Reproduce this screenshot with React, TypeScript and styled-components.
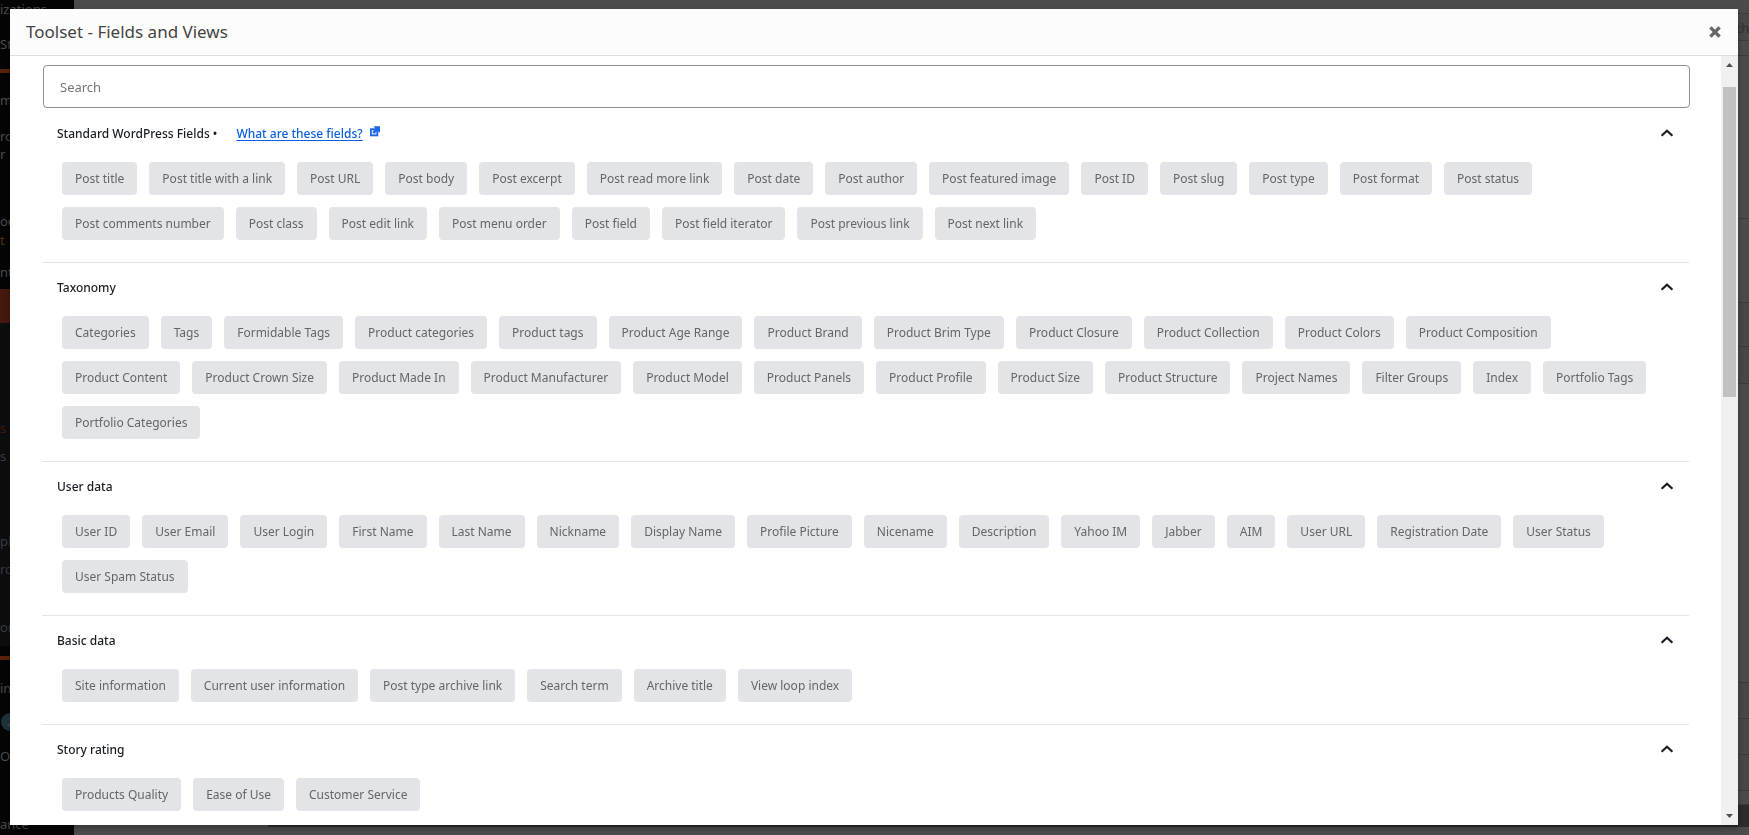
import React, { useState } from "react";
import styled, { createGlobalStyle, css } from "styled-components";

const GlobalStyle = createGlobalStyle`
  *, *::before, *::after { box-sizing: border-box; }
  html, body, #root { height: 100%; }
  body {
    margin: 0;
    overflow: hidden;
    background: #4b4b4b;
    color: #1d2327;
    font-family: "Noto Sans", "Open Sans", sans-serif;
    font-size: 12px;
  }
`;

/* ---------- dimmed admin page behind the dialog ---------- */

const Page = styled.div`
  height: 100vh;
  display: flex;
  overflow: hidden;
`;

const AdminMenu = styled.ul`
  flex: 0 0 74px;
  margin: 0;
  padding: 0;
  list-style: none;
  background: #050505;
  overflow: hidden;
`;

const tones = {
  plain: css`background: #050505; color: #4a4b4c;`,
  sub: css`background: #0b0d0f; color: #3b3c3d;`,
  warm: css`background: #050505; color: #4a3310;`,
  hot: css`background: #0b0d0f; color: #47180e;`,
  current: css`background: #47180e; color: #4a4b4c;`,
  rule: css`background: #5a220c;`,
};

const MenuItem = styled.li<{ $h: number; $tone: keyof typeof tones }>`
  display: flex;
  align-items: center;
  height: ${(p) => p.$h}px;
  font-size: 13px;
  line-height: 18px;
  white-space: nowrap;
  ${(p) => tones[p.$tone]}
`;

const Count = styled.span`
  width: 18px;
  height: 18px;
  margin-left: 1px;
  border-radius: 50%;
  background: #1c343b;
  color: #4a4b4c;
  font-size: 11px;
  text-align: center;
`;

const Workspace = styled.div`
  flex: 1;
  display: flex;
  flex-direction: column;
  min-width: 0;
`;

const WorkRow = styled.div<{ $h: number; $shade?: string }>`
  height: ${(p) => p.$h}px;
  border-bottom: 1px solid #3b3b3b;
  background: ${(p) => p.$shade ?? "transparent"};
  color: #2e2f30;
  font-size: 13px;
  line-height: 28px;
  text-align: right;
`;

const WorkFooter = styled.div`
  height: 22px;
  margin-left: 194px;
  background: #2c2c2c;
`;

/* ---------- dialog ---------- */

const Overlay = styled.div`
  position: fixed;
  inset: 0;
  display: flex;
  padding: 9px 11px 10px 10px;
`;

const Dialog = styled.section`
  flex: 1;
  display: flex;
  flex-direction: column;
  min-width: 0;
  background: #fff;
  box-shadow: 0 3px 6px rgba(0, 0, 0, 0.3);
`;

const DialogHeader = styled.header`
  flex: none;
  display: flex;
  align-items: center;
  justify-content: space-between;
  height: 47px;
  padding: 0 16px;
  background: #fcfcfc;
  border-bottom: 1px solid #dfdfdf;
`;

const DialogTitle = styled.h1`
  margin: 0;
  color: #444;
  font-size: 17px;
  font-weight: 400;
  line-height: 24px;
`;

const CloseButton = styled.button`
  display: flex;
  padding: 0;
  border: 0;
  background: none;
  color: #666;
  cursor: pointer;
`;

const DialogBody = styled.div`
  flex: 1;
  display: flex;
  min-height: 0;
`;

const Content = styled.div`
  flex: 1;
  min-width: 0;
  padding: 9px 31px 0 32px;
  overflow-y: auto;
  scrollbar-width: none;
`;

const SearchRow = styled.div`
  display: flex;
  padding-left: 1px;
`;

const SearchBox = styled.input`
  flex: 1;
  height: 43px;
  padding: 0 16px;
  border: 1px solid #8c8f94;
  border-radius: 4px;
  background: #fff;
  color: #2c3338;
  font: 13px "Noto Sans", "Open Sans", sans-serif;
  &::placeholder { color: #757575; opacity: 1; }
`;

const Group = styled.section`
  margin-right: 1px;
  padding-bottom: 22px;
  border-top: 1px solid #e2e4e7;
  &:first-of-type { border-top-color: transparent; }
`;

const GroupHeader = styled.div`
  display: flex;
  align-items: flex-start;
  justify-content: space-between;
  height: 53px;
  padding: 15px 15px 0;
`;

const GroupTitle = styled.h2`
  display: flex;
  align-items: center;
  margin: 0;
  color: #191e23;
  font-size: 12px;
  font-weight: 500;
  line-height: 20px;
  white-space: pre;
`;

const HelpLink = styled.a`
  display: flex;
  align-items: flex-start;
  gap: 7px;
  margin-left: 19px;
  color: #0b5fe0;
  text-underline-offset: 2px;
`;

const ToggleButton = styled.button`
  display: flex;
  align-items: center;
  height: 18px;
  padding: 0;
  border: 0;
  background: none;
  color: #191e23;
  cursor: pointer;
`;

const Chips = styled.div`
  display: flex;
  flex-wrap: wrap;
  gap: 12px;
  padding: 0 20px;
`;

const Chip = styled.button`
  height: 33px;
  padding: 0 13px;
  border: 0;
  border-radius: 4px;
  background: #e2e4e7;
  color: #666;
  font: 12px/18px "Noto Sans", "Open Sans", sans-serif;
  white-space: nowrap;
  cursor: pointer;
`;

const ScrollTrack = styled.div`
  flex: 0 0 17px;
  display: flex;
  flex-direction: column;
  align-items: center;
  justify-content: space-between;
  background: #f0f0f0;
`;

const ScrollArrow = styled.svg`
  flex: none;
  display: block;
  width: 17px;
  height: 17px;
  fill: #505050;
`;

const ScrollLane = styled.div`
  flex: 1;
  width: 13px;
  padding-top: 14px;
`;

const ScrollThumb = styled.div`
  height: 43%;
  background: #c1c1c1;
`;

type GroupData = { title: string; help?: boolean; fields: string[] };

const groups: GroupData[] = [
  {
    title: "Standard WordPress Fields",
    help: true,
    fields: [
      "Post title", "Post title with a link", "Post URL", "Post body", "Post excerpt",
      "Post read more link", "Post date", "Post author", "Post featured image", "Post ID",
      "Post slug", "Post type", "Post format", "Post status", "Post comments number",
      "Post class", "Post edit link", "Post menu order", "Post field", "Post field iterator",
      "Post previous link", "Post next link",
    ],
  },
  {
    title: "Taxonomy",
    fields: [
      "Categories", "Tags", "Formidable Tags", "Product categories", "Product tags",
      "Product Age Range", "Product Brand", "Product Brim Type", "Product Closure",
      "Product Collection", "Product Colors", "Product Composition", "Product Content",
      "Product Crown Size", "Product Made In", "Product Manufacturer", "Product Model",
      "Product Panels", "Product Profile", "Product Size", "Product Structure",
      "Project Names", "Filter Groups", "Index", "Portfolio Tags", "Portfolio Categories",
    ],
  },
  {
    title: "User data",
    fields: [
      "User ID", "User Email", "User Login", "First Name", "Last Name", "Nickname",
      "Display Name", "Profile Picture", "Nicename", "Description", "Yahoo IM", "Jabber",
      "AIM", "User URL", "Registration Date", "User Status", "User Spam Status",
    ],
  },
  {
    title: "Basic data",
    fields: [
      "Site information", "Current user information", "Post type archive link",
      "Search term", "Archive title", "View loop index",
    ],
  },
  { title: "Story rating", fields: ["Products Quality", "Ease of Use", "Customer Service"] },
];

const menu: { h: number; tone: keyof typeof tones; text?: string; count?: number }[] = [
  { h: 18, tone: "plain", text: "izations" },
  { h: 51, tone: "plain", text: "St" },
  { h: 4, tone: "rule" },
  { h: 54, tone: "plain", text: "mm" },
  { h: 17, tone: "plain", text: "ro" },
  { h: 19, tone: "plain", text: "r" },
  { h: 48, tone: "plain" },
  { h: 20, tone: "plain", text: "oc" },
  { h: 18, tone: "warm", text: "t" },
  { h: 6, tone: "plain" },
  { h: 34, tone: "plain", text: "nt" },
  { h: 34, tone: "current" },
  { h: 91, tone: "sub" },
  { h: 28, tone: "hot", text: "s" },
  { h: 28, tone: "sub", text: "s" },
  { h: 57, tone: "sub" },
  { h: 28, tone: "sub", text: "pl" },
  { h: 28, tone: "sub", text: "rc" },
  { h: 24, tone: "sub" },
  { h: 39, tone: "sub", text: "or" },
  { h: 10, tone: "plain" },
  { h: 4, tone: "rule" },
  { h: 11, tone: "plain" },
  { h: 34, tone: "plain", text: "in" },
  { h: 34, tone: "plain", count: 2 },
  { h: 34, tone: "plain", text: "Org" },
  { h: 34, tone: "plain" },
  { h: 34, tone: "plain", text: "ance" },
];

const workRows: { h: number; text?: string; shade?: string }[] = [
  { h: 14 },
  { h: 27, text: "th", shade: "#484848" },
  { h: 15 },
  { h: 163 },
  { h: 84 },
  { h: 44, shade: "#474747" },
  { h: 37, shade: "#474747" },
  { h: 299 },
  { h: 36, shade: "#474747" },
  { h: 36, shade: "#474747" },
  { h: 36, shade: "#474747" },
  { h: 14 },
];

const Chevron = ({ open }: { open: boolean }) => (
  <svg width="14" height="8" viewBox="0 0 14 8" fill="none" stroke="currentColor" strokeWidth="2.2">
    <path d={open ? "M1.6 6.8 L7 1.8 L12.4 6.8" : "M1.6 1.2 L7 6.2 L12.4 1.2"} />
  </svg>
);

const ExternalIcon = () => (
  <svg width="10" height="15" viewBox="0 -2 10 15" fill="none" stroke="#1a66e5" aria-hidden="true">
    <rect x="0.8" y="3.2" width="6.6" height="6.2" fill="#c9dcfa" strokeWidth="1.8" />
    <path d="M3.4 6.8L7.6 2.6" strokeWidth="2.4" />
    <path d="M3.6 0.2H10V6.8L8 5.2L5.2 2.4Z" fill="#1a66e5" stroke="none" />
  </svg>
);

const FieldGroup = ({ group }: { group: GroupData }) => {
  const [open, setOpen] = useState(true);
  return (
    <Group>
      <GroupHeader>
        <GroupTitle>
          {group.title}
          {group.help && (
            <>
              {" •"}
              <HelpLink href="#fields">
                What are these fields?
                <ExternalIcon />
              </HelpLink>
            </>
          )}
        </GroupTitle>
        <ToggleButton type="button" aria-expanded={open} aria-label={group.title} onClick={() => setOpen(!open)}>
          <Chevron open={open} />
        </ToggleButton>
      </GroupHeader>
      {open && (
        <Chips>
          {group.fields.map((f) => (
            <Chip key={f} type="button">{f}</Chip>
          ))}
        </Chips>
      )}
    </Group>
  );
};

export default function App() {
  return (
    <>
      <GlobalStyle />
      <Page aria-hidden="true">
        <AdminMenu>
          {menu.map((m, i) => (
            <MenuItem key={i} $h={m.h} $tone={m.tone}>
              {m.text}
              {m.count && <Count>{m.count}</Count>}
            </MenuItem>
          ))}
        </AdminMenu>
        <Workspace>
          {workRows.map((r, i) => (
            <WorkRow key={i} $h={r.h} $shade={r.shade}>{r.text}</WorkRow>
          ))}
          <WorkFooter />
        </Workspace>
      </Page>
      <Overlay>
        <Dialog role="dialog" aria-modal="true" aria-labelledby="dialog-title">
          <DialogHeader>
            <DialogTitle id="dialog-title">Toolset - Fields and Views</DialogTitle>
            <CloseButton type="button" aria-label="Close">
              <svg width="14" height="14" viewBox="0 0 14 14" stroke="currentColor" strokeWidth="3.4">
                <path d="M2.4 2.4L11.6 11.6M11.6 2.4L2.4 11.6" />
              </svg>
            </CloseButton>
          </DialogHeader>
          <DialogBody>
            <Content>
              <SearchRow>
                <SearchBox type="search" placeholder="Search" aria-label="Search" />
              </SearchRow>
              {groups.map((g) => (
                <FieldGroup key={g.title} group={g} />
              ))}
            </Content>
            <ScrollTrack>
              <ScrollArrow viewBox="0 0 17 17"><path d="M5 11H12L8.5 7Z" /></ScrollArrow>
              <ScrollLane>
                <ScrollThumb />
              </ScrollLane>
              <ScrollArrow viewBox="0 0 17 17"><path d="M5 6H12L8.5 10Z" /></ScrollArrow>
            </ScrollTrack>
          </DialogBody>
        </Dialog>
      </Overlay>
    </>
  );
}
